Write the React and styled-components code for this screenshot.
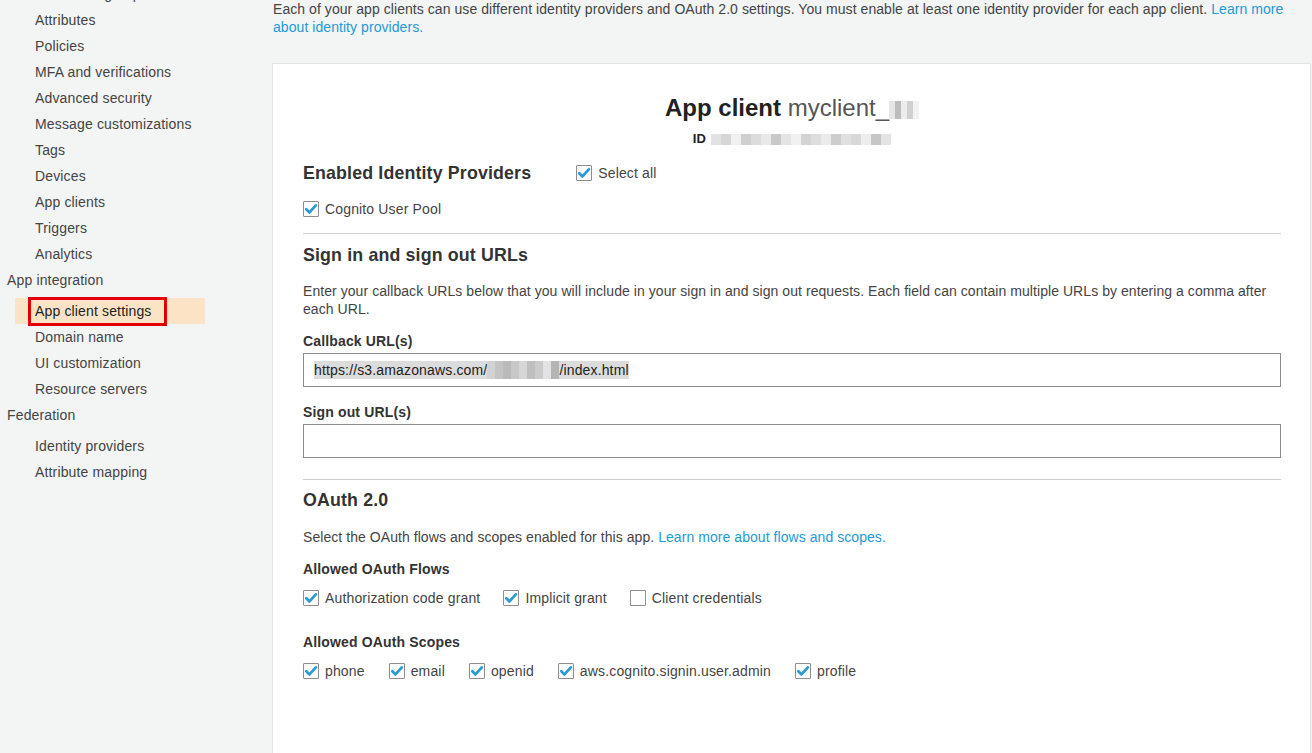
import React from 'react';
import styled, { createGlobalStyle } from 'styled-components';

const GlobalStyle = createGlobalStyle`
  html, body {
    margin: 0;
    padding: 0;
    background: #f3f4f4;
    font-family: 'Liberation Sans', Arial, Helvetica, sans-serif;
    color: #444;
    letter-spacing: 0.15px;
    overflow: hidden;
  }
`;

const sideGroups = [
  {
    items: [
      'Users and groups',
      'Attributes',
      'Policies',
      'MFA and verifications',
      'Advanced security',
      'Message customizations',
      'Tags',
      'Devices',
      'App clients',
      'Triggers',
      'Analytics',
    ],
  },
  {
    title: 'App integration',
    items: ['App client settings', 'Domain name', 'UI customization', 'Resource servers'],
    active: 'App client settings',
  },
  {
    title: 'Federation',
    items: ['Identity providers', 'Attribute mapping'],
  },
];

const flows = [
  { label: 'Authorization code grant', checked: true },
  { label: 'Implicit grant', checked: true },
  { label: 'Client credentials', checked: false },
];

const scopes = ['phone', 'email', 'openid', 'aws.cognito.signin.user.admin', 'profile'];

// pixelated (blurred-out) blocks standing in for hidden ids
const titleBlur = ['#e6e6e6', '#bdbdbd', '#ececec', '#d0d0d0', '#f2f2f2'];
const idBlur = [
  '#e2e2e2', '#d6d6d6', '#f0f0f0', '#cfcfcf', '#dcdcdc', '#e8e8e8', '#c9c9c9',
  '#e4e4e4', '#f1f1f1', '#d3d3d3', '#dedede', '#ebebeb', '#cdcdcd', '#e0e0e0',
  '#d8d8d8', '#ededed', '#c6c6c6', '#e3e3e3',
];
const urlBlur = ['#d2d2d2', '#c4c4c4', '#bababa', '#c8c8c8', '#d6d6d6', '#bfbfbf', '#cbcbcb', '#e2e2e2', '#b5b5b5'];

const Check = ({ checked }) => (
  <Box>
    {checked && (
      <svg width="14" height="14" viewBox="0 0 14 14">
        <path d="M2.3 7.3 L5.5 10.4 L11.8 3.4" fill="none" stroke="#2a9bd6" strokeWidth="2.8" strokeLinecap="round" strokeLinejoin="round" />
      </svg>
    )}
  </Box>
);

const CheckItem = ({ label, checked = true }) => (
  <CheckLabel>
    <Check checked={checked} />
    {label}
  </CheckLabel>
);

const Blur = ({ colors, w, h }) => (
  <BlurWrap>
    {colors.map((c, i) => (
      <BlurCell key={i} $w={w} $h={h} style={{ background: c }} />
    ))}
  </BlurWrap>
);

const App = () => {
  return (
    <>
      <GlobalStyle />
      <Page>
        <Sidebar>
          {sideGroups.map((g, gi) => (
            <Group key={gi}>
              {g.title && <GroupTitle>{g.title}</GroupTitle>}
              <NavList>
                {g.items.map(item => (
                  <NavItem key={item} $active={item === g.active}>
                    {item === g.active ? <Marked>{item}</Marked> : item}
                  </NavItem>
                ))}
              </NavList>
            </Group>
          ))}
        </Sidebar>

        <Main>
          <Intro>
            Each of your app clients can use different identity providers and OAuth 2.0 settings. You must enable at
            least one identity provider for each app client. <Link>Learn more about identity providers.</Link>
          </Intro>

          <Card>
            <ClientTitle>
              <strong>App client</strong> <Light>myclient_</Light>
              <Blur colors={titleBlur} w={6} h={18} />
            </ClientTitle>
            <ClientId>
              <b>ID</b>
              <Blur colors={idBlur} w={10} h={11} />
            </ClientId>

            <HeadingRow>
              <SectionTitle>Enabled Identity Providers</SectionTitle>
              <CheckItem label="Select all" />
            </HeadingRow>
            <CheckRow $mt={16}>
              <CheckItem label="Cognito User Pool" />
            </CheckRow>

            <Divider $mt={15} />

            <SectionTitle $mt={10}>Sign in and sign out URLs</SectionTitle>
            <Text $mt={16}>
              Enter your callback URLs below that you will include in your sign in and sign out requests. Each field
              can contain multiple URLs by entering a comma after each URL.
            </Text>

            <FieldLabel $mt={14}>Callback URL(s)</FieldLabel>
            <Field>
              <Selected>
                https://s3.amazonaws.com/
                <Blur colors={urlBlur} w={8} h={18} />
                /index.html
              </Selected>
            </Field>

            <FieldLabel $mt={16}>Sign out URL(s)</FieldLabel>
            <Field />

            <Divider $mt={21} />

            <SectionTitle $mt={9}>OAuth 2.0</SectionTitle>
            <Text $mt={17}>
              Select the OAuth flows and scopes enabled for this app. <Link>Learn more about flows and scopes.</Link>
            </Text>

            <FieldLabel $mt={14}>Allowed OAuth Flows</FieldLabel>
            <CheckRow $mt={11}>
              {flows.map(f => (
                <CheckItem key={f.label} label={f.label} checked={f.checked} />
              ))}
            </CheckRow>

            <FieldLabel $mt={26}>Allowed OAuth Scopes</FieldLabel>
            <CheckRow $mt={11} $gap={24}>
              {scopes.map(s => (
                <CheckItem key={s} label={s} />
              ))}
            </CheckRow>
          </Card>
        </Main>
      </Page>
    </>
  );
};

const Page = styled.div`
  display: flex;
  height: 753px;
  overflow: hidden;
`;

const Sidebar = styled.nav`
  width: 272px;
  flex-shrink: 0;
  margin-top: -19px;
  font-size: 14px;
`;

const Group = styled.div``;

const GroupTitle = styled.div`
  line-height: 26px;
  padding-left: 7px;
  margin-bottom: 5px;
`;

const NavList = styled.ul`
  list-style: none;
  margin: 0 0 0 15px;
  padding: 0;
  width: 190px;
`;

const NavItem = styled.li`
  line-height: 26px;
  padding-left: 20px;
  background: ${p => (p.$active ? '#fbe4c6' : 'transparent')};
  color: ${p => (p.$active ? '#222' : '#444')};
`;

const Marked = styled.span`
  position: relative;

  &::after {
    content: '';
    position: absolute;
    left: -7px;
    right: -16px;
    top: -6px;
    bottom: -7px;
    border: 3px solid #e30000;
  }
`;

const Main = styled.main`
  flex: 1;
  min-width: 0;
  padding-right: 1px;
`;

const Intro = styled.p`
  margin: 0 0 27px 1px;
  font-size: 14px;
  line-height: 18px;
  letter-spacing: 0.06px;
  color: #444;
`;

const Link = styled.a`
  color: #1e9ad6;
  cursor: pointer;
`;

const Card = styled.section`
  background: #fff;
  border: 1px solid #e3e4e4;
  padding: 29px 29px 71px 30px;
  height: 700px;
  box-sizing: border-box;
`;

const ClientTitle = styled.h1`
  margin: 0;
  font-size: 24px;
  line-height: 30px;
  font-weight: normal;
  letter-spacing: 0;
  color: #333;
  text-align: center;

  strong {
    color: #222;
  }
`;

const Light = styled.span`
  color: #555;
`;

const ClientId = styled.div`
  margin-top: 7px;
  display: flex;
  justify-content: center;
  align-items: center;
  gap: 5px;
  font-size: 13px;
  line-height: 18px;
  color: #222;
`;

const BlurWrap = styled.span`
  display: inline-flex;
  vertical-align: middle;
  filter: blur(0.6px);
`;

const BlurCell = styled.span`
  display: inline-block;
  width: ${p => p.$w}px;
  height: ${p => p.$h}px;
`;

const HeadingRow = styled.div`
  margin-top: 14px;
  display: flex;
  align-items: center;
  gap: 45px;
`;

const SectionTitle = styled.h2`
  margin: ${p => p.$mt || 0}px 0 0;
  font-size: 17.8px;
  line-height: 22px;
  font-weight: bold;
  color: #333;
`;

const CheckRow = styled.div`
  margin-top: ${p => p.$mt || 0}px;
  display: flex;
  gap: ${p => p.$gap || 23}px;
`;

const CheckLabel = styled.label`
  display: inline-flex;
  align-items: center;
  gap: 6px;
  font-size: 14px;
  line-height: 18px;
  color: #444;
`;

const Box = styled.span`
  width: 16px;
  height: 16px;
  box-sizing: border-box;
  border: 1px solid #8e8e8e;
  border-radius: 1px;
  background: #fff;
  display: inline-flex;
  align-items: center;
  justify-content: center;
`;

const Divider = styled.hr`
  margin: ${p => p.$mt}px 0 0;
  border: 0;
  border-top: 1px solid #cfcfcf;
`;

const Text = styled.p`
  margin: ${p => p.$mt || 0}px 0 0;
  font-size: 14px;
  line-height: 18px;
  letter-spacing: 0.06px;
  color: #444;
`;

const FieldLabel = styled.div`
  margin-top: ${p => p.$mt || 0}px;
  font-size: 14px;
  line-height: 18px;
  font-weight: bold;
  color: #333;
`;

const Field = styled.div`
  margin-top: 3px;
  height: 34px;
  box-sizing: border-box;
  border: 1px solid #8c8c8c;
  padding: 0 10px;
  display: flex;
  align-items: center;
  font-size: 14px;
  color: #222;
`;

const Selected = styled.span`
  display: inline-flex;
  align-items: center;
  background: #dcdcdc;
  line-height: 18px;
`;

export default App;
